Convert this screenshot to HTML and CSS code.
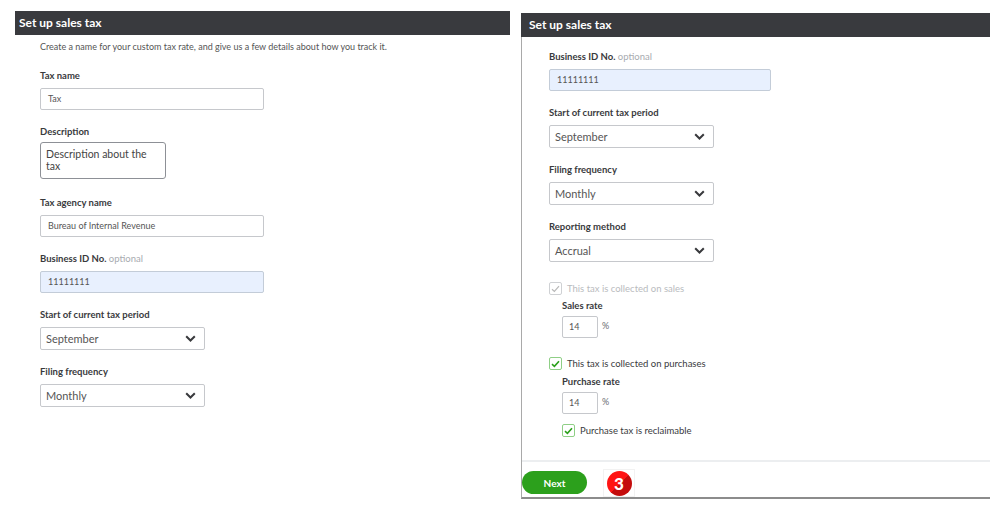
FILE: index.html
```html
<!DOCTYPE html>
<html lang="en">
<head>
<meta charset="UTF-8">
<meta name="viewport" content="width=device-width, initial-scale=1.0">
<title>Set up sales tax</title>
<link rel="stylesheet" href="styles.css">
</head>
<body>
<div class="page">
    <!-- first step of the form -->
    <div class="panel panel-left">
        <div class="panel-header">Set up sales tax</div>
        <div class="panel-body">
            <p class="intro">Create a name for your custom tax rate, and give us a few details about how you track it.</p>
            <div class="field">
                <div class="label">Tax name</div>
                <div class="input wide">Tax</div>
            </div>
            <div class="field field-desc">
                <div class="label">Description</div>
                <div class="textarea">Description about the tax</div>
            </div>
            <div class="field">
                <div class="label">Tax agency name</div>
                <div class="input wide">Bureau of Internal Revenue</div>
            </div>
            <div class="field">
                <div class="label">Business ID No. <span class="optional">optional</span></div>
                <div class="input wide filled">11111111</div>
            </div>
            <div class="field">
                <div class="label">Start of current tax period</div>
                <div class="select">September <svg width="11" height="7" viewBox="0 0 11 7"><polyline points="1.2,1.2 5.5,5.5 9.8,1.2" fill="none" stroke="#393a3d" stroke-width="2"/></svg></div>
            </div>
            <div class="field">
                <div class="label">Filing frequency</div>
                <div class="select">Monthly <svg width="11" height="7" viewBox="0 0 11 7"><polyline points="1.2,1.2 5.5,5.5 9.8,1.2" fill="none" stroke="#393a3d" stroke-width="2"/></svg></div>
            </div>
        </div>
    </div>

    <!-- second step, scrolled down -->
    <div class="panel panel-right">
        <div class="panel-header">Set up sales tax</div>
        <div class="panel-body">
            <div class="field">
                <div class="label">Business ID No. <span class="optional">optional</span></div>
                <div class="input wide-r filled">11111111</div>
            </div>
            <div class="field">
                <div class="label">Start of current tax period</div>
                <div class="select">September <svg width="11" height="7" viewBox="0 0 11 7"><polyline points="1.2,1.2 5.5,5.5 9.8,1.2" fill="none" stroke="#393a3d" stroke-width="2"/></svg></div>
            </div>
            <div class="field">
                <div class="label">Filing frequency</div>
                <div class="select">Monthly <svg width="11" height="7" viewBox="0 0 11 7"><polyline points="1.2,1.2 5.5,5.5 9.8,1.2" fill="none" stroke="#393a3d" stroke-width="2"/></svg></div>
            </div>
            <div class="field">
                <div class="label">Reporting method</div>
                <div class="select">Accrual <svg width="11" height="7" viewBox="0 0 11 7"><polyline points="1.2,1.2 5.5,5.5 9.8,1.2" fill="none" stroke="#393a3d" stroke-width="2"/></svg></div>
            </div>

            <div class="check disabled">
                <span class="box"><svg width="9" height="8" viewBox="0 0 9 8"><polyline points="1,4.2 3.4,6.4 8,1.2" fill="none" stroke="#b8b8b8" stroke-width="1.2"/></svg></span>
                This tax is collected on sales
            </div>
            <div class="rate">
                <div class="label">Sales rate</div>
                <div class="rate-row"><div class="input small">14</div><span class="pct">%</span></div>
            </div>

            <div class="check on">
                <span class="box"><svg width="9" height="8" viewBox="0 0 9 8"><polyline points="1,4.2 3.4,6.4 8,1.2" fill="none" stroke="#2ca01c" stroke-width="1.6"/></svg></span>
                This tax is collected on purchases
            </div>
            <div class="rate">
                <div class="label">Purchase rate</div>
                <div class="rate-row"><div class="input small">14</div><span class="pct">%</span></div>
                <div class="check on sub">
                    <span class="box"><svg width="9" height="8" viewBox="0 0 9 8"><polyline points="1,4.2 3.4,6.4 8,1.2" fill="none" stroke="#2ca01c" stroke-width="1.6"/></svg></span>
                    Purchase tax is reclaimable
                </div>
            </div>
        </div>
        <div class="panel-footer">
            <button class="btn-next">Next</button>
            <span class="step"><span class="step-dot">3</span></span>
        </div>
    </div>
</div>
</body>
</html>
```

FILE: styles.css
```css
body {
    margin: 0;
    padding: 0;
    background-color: #fff;
    font-family: Lato, "Open Sans", Arial, sans-serif;
    color: #393a3d;
}
.page {
    display: flex;
    align-items: flex-start;
    padding-left: 15px;
}
.panel-left {
    width: 495px;
    margin-top: 11px;
}
.panel-right {
    width: 468px;
    margin-top: 13px;
    margin-left: 11px;
    border-left: 1px solid #a9a9a9;
    border-bottom: 2px solid #8c8c8c;
}
.panel-header {
    height: 24px;
    line-height: 24px;
    background-color: #393a3e;
    color: #fff;
    font-size: 12px;
    font-weight: 700;
    padding-left: 4px;
}
.panel-left .panel-body {
    padding: 6px 0 0 25px;
}
.panel-right .panel-header {
    margin-left: -1px;
    padding-left: 8px;
}
.panel-right .panel-body {
    padding: 14px 0 0 27px;
    height: 423px;
    box-sizing: border-box;
}
.intro {
    margin: 0 0 17px;
    font-size: 9px;
    line-height: 12px;
    color: #555;
}
.field {
    margin-bottom: 16px;
}
.label {
    font-size: 9.5px;
    line-height: 12px;
    font-weight: 700;
    color: #393a3d;
    margin-bottom: 6px;
}
.optional {
    font-weight: 400;
    color: #a8abb0;
}
.input {
    height: 22px;
    box-sizing: border-box;
    border: 1px solid #c6c8cc;
    border-radius: 2px;
    padding-left: 7px;
    font-size: 9px;
    line-height: 20px;
    color: #555;
}
.wide {
    width: 224px;
}
.wide-r {
    width: 222px;
}
.filled {
    background-color: #e8f0fe;
    border-color: #c3ccd8;
}
.textarea {
    width: 126px;
    height: 37px;
    box-sizing: border-box;
    border: 1px solid #8d9096;
    border-radius: 3px;
    padding: 5px 5px;
    font-size: 10.5px;
    line-height: 12px;
    color: #444;
}
.field-desc {
    margin-bottom: 18px;
}
.field-desc .label {
    margin-bottom: 4px;
}
.select {
    width: 165px;
    height: 23px;
    box-sizing: border-box;
    border: 1px solid #c6c8cc;
    border-radius: 2px;
    padding: 0 8px 0 5px;
    display: flex;
    align-items: center;
    justify-content: space-between;
    font-size: 11px;
    color: #555;
}
.check {
    display: flex;
    align-items: center;
    gap: 5px;
    font-size: 9.5px;
    line-height: 13px;
    color: #393a3d;
    margin-top: 20px;
}
.check .box {
    width: 13px;
    height: 13px;
    box-sizing: border-box;
    border: 1px solid #8fcf86;
    border-radius: 2px;
    display: flex;
    align-items: center;
    justify-content: center;
}
.check.disabled {
    color: #b9bbbe;
}
.check.disabled .box {
    border-color: #cfd1d4;
}
.check.on + .rate {
    margin-top: 6px;
}
.rate {
    margin-left: 13px;
    margin-top: 5px;
}
.rate .label {
    margin-bottom: 4px;
}
.rate-row {
    display: flex;
    align-items: flex-start;
}
.input.small {
    width: 36px;
    padding-left: 6px;
}
.pct {
    font-size: 9px;
    color: #6b6c72;
    margin-left: 4px;
    line-height: 20px;
}
.check.on {
    margin-top: 19px;
}
.check.sub {
    margin-top: 10px;
}
.panel-footer {
    border-top: 2px solid #eceef0;
    height: 37px;
    display: flex;
    align-items: flex-start;
    gap: 16px;
    padding-top: 9px;
    box-sizing: border-box;
}
.btn-next {
    width: 65px;
    height: 23px;
    border: none;
    border-radius: 12px;
    background-color: #2ca01c;
    color: #fff;
    font-family: Lato, Arial, sans-serif;
    font-size: 10px;
    font-weight: 700;
}
.step {
    width: 30px;
    height: 26px;
    margin-top: -2px;
    border: 1px solid #f2f2f2;
    display: flex;
    align-items: center;
    justify-content: center;
}
.step-dot {
    width: 25px;
    height: 25px;
    border-radius: 50%;
    background: linear-gradient(135deg, #ff1414 50%, #c40c0c 50%);
    color: #fff;
    font-size: 17px;
    font-weight: 900;
    line-height: 25px;
    text-align: center;
}
```
